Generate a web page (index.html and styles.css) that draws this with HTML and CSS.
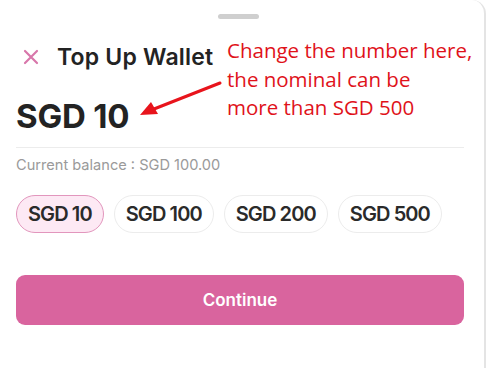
FILE: index.html
```html
<!DOCTYPE html>
<html>
<head>
<meta charset="utf-8">
<link rel="stylesheet" href="styles.css">
</head>
<body>
<div class="sheet">
  <div class="handle"></div>
  <div class="header">
    <svg class="close" width="16" height="16" viewBox="0 0 16 16"><path d="M2 2 L14 14 M14 2 L2 14" stroke="#d877ab" stroke-width="2.2" stroke-linecap="round"/></svg>
    <span class="title">Top Up Wallet</span>
  </div>
  <div class="amount">SGD 10</div>
  <div class="divider"></div>
  <div class="balance">Current balance : SGD 100.00</div>
  <div class="chips">
    <span class="chip active">SGD 10</span>
    <span class="chip">SGD 100</span>
    <span class="chip">SGD 200</span>
    <span class="chip">SGD 500</span>
  </div>
  <button class="continue">Continue</button>
  <div class="note">Change the number here,<br>the nominal can be<br>more than SGD 500</div>
  <svg class="arrow" width="100" height="50" viewBox="0 0 100 50">
    <path d="M84 5 L18 31" stroke="#e8141c" stroke-width="3" stroke-linecap="round"/>
    <path d="M4 37 L15 24 L22 36 Z" fill="#e8141c"/>
  </svg>
</div>
</body>
</html>
```
FILE: styles.css
```css
html, body { margin: 0; padding: 0; background: #fff; }
body { font-family: Inter, "Noto Sans", sans-serif; }
.sheet {
  position: relative;
  width: 486px;
  height: 368px;
  box-sizing: border-box;
  border-right: 2px solid #e4e4e4;
  border-top-right-radius: 14px;
  display: flex;
  flex-direction: column;
  padding: 0 20px 0 16px;
}
.handle {
  align-self: center;
  width: 41px; height: 5px; border-radius: 3px;
  background: #cfcfcf;
  margin-top: 14px;
  margin-left: -4px;
}
.header {
  display: flex; align-items: center;
  margin-top: 25px;
  height: 26px;
}
.close { margin-left: 7px; margin-right: 18px; }
.title { font-size: 23px; font-weight: 600; color: #232323; letter-spacing: 0.2px; }
.amount {
  margin-top: 26px;
  font-size: 33px; font-weight: 700; color: #232323; letter-spacing: -0.2px;
  line-height: 40px;
}
.divider { height: 1px; background: #ececec; margin-top: 11px; }
.balance { margin-top: 9px; font-size: 14.6px; color: #9a9a9a; line-height: 17px; }
.chips { display: flex; gap: 10px; margin-top: 21px; }
.chip {
  height: 38px; box-sizing: border-box;
  border: 1px solid #ececec; border-radius: 19px;
  padding: 0 11px;
  display: flex; align-items: center;
  font-size: 20px; font-weight: 600; color: #2a2a2a; letter-spacing: -0.9px;
}
.chip.active { background: #fde9f4; border-color: #e296bd; }
.continue {
  margin-top: 42px;
  height: 50px; width: 448px;
  border: none; border-radius: 9px;
  background: #d9649e; color: #fff;
  font-family: Inter, sans-serif; font-size: 17px; font-weight: 600;
}
.note {
  position: absolute; left: 227px; top: 36px;
  font-family: "Open Sans", sans-serif; font-size: 20.5px; line-height: 28.5px;
  color: #e0121a;
}
.arrow { position: absolute; left: 136px; top: 78px; }
```
